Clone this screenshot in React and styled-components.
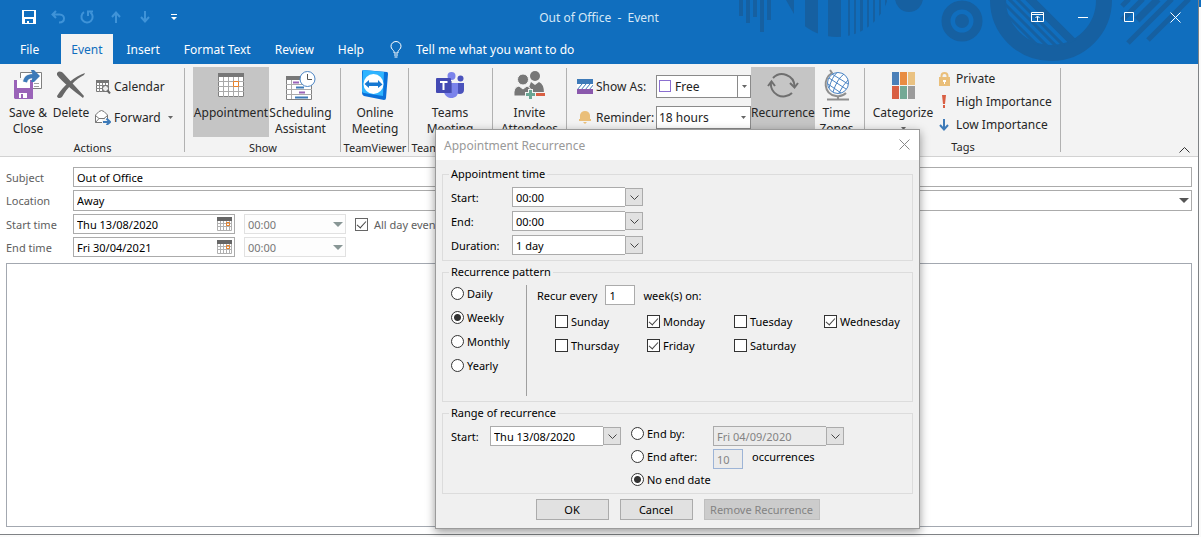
import React, { useState } from 'react'
import styled, { createGlobalStyle } from 'styled-components'

const days = ['Sunday', 'Monday', 'Tuesday', 'Wednesday', 'Thursday', 'Friday', 'Saturday']
const patterns = ['Daily', 'Weekly', 'Monthly', 'Yearly']
const tabs = ['File', 'Event', 'Insert', 'Format Text', 'Review', 'Help']

/* ---------- icons ---------- */

const SaveIcon = () => (
    <svg width="14" height="14" viewBox="0 0 14 14">
        <path fill="#fff" fillRule="evenodd" d="M0 0h14v14H0zM2 1v6h10V1zM3 9v4h2v-2h2v2h4V9z" />
    </svg>
)
const UndoIcon = () => (
    <svg width="14" height="14" viewBox="0 0 14 14" fill="none" stroke="#3f93d8" strokeWidth="2">
        <path d="M5 1L1.500 4.500L5 8M2 4.500H8.500C12 4.500 13 7 13 8.500C13 11 11 12.500 8 12.500" />
    </svg>
)
const RedoIcon = () => (
    <svg width="14" height="14" viewBox="0 0 14 14" fill="none" stroke="#3f93d8" strokeWidth="2">
        <path d="M4 2.200A5.600 5.600 0 1 0 10.500 2.500M8 6V1.500H13" />
    </svg>
)
const ArrowIcon = ({ down, color = '#3f93d8' }) => (
    <svg width="10" height="12" viewBox="0 0 10 12" fill="none" stroke={color} strokeWidth="2">
        <path d={down ? 'M5 0V11M1 6L5 10.500L9 6' : 'M5 12V1M1 6L5 1.500L9 6'} />
    </svg>
)
const MoreIcon = () => (
    <svg width="6" height="6" viewBox="0 0 6 6" fill="#fff">
        <path d="M0 0h6v1H0zM0 3h6L3 6z" />
    </svg>
)
const BulbIcon = () => (
    <svg width="12" height="17" viewBox="0 0 12 17" fill="none" stroke="#fff">
        <path d="M4 12V10.500C3.500 9 1 8 1 5.200A5 4.700 0 0 1 11 5.200C11 8 8.500 9 8 10.500V12ZM4 14H8M4.500 16H7.500" />
    </svg>
)
const RibbonToggleIcon = () => (
    <svg width="13" height="10" viewBox="0 0 13 10" fill="none" stroke="#fff">
        <path d="M.5 .5H12.500V9.500H.5ZM.5 2.500H12.500M6.500 9V4.500M4.500 6L6.500 4L8.500 6" />
    </svg>
)
const MinIcon = () => <svg width="10" height="10" viewBox="0 0 10 10"><path d="M0 5.500H10" stroke="#fff" /></svg>
const MaxIcon = () => <svg width="10" height="10" viewBox="0 0 10 10"><path d="M.5 .5H9.500V9.500H.5Z" fill="none" stroke="#fff" /></svg>
const CrossIcon = ({ color = '#fff' }) => (
    <svg width="11" height="11" viewBox="0 0 11 11"><path d="M.5 .5L10.500 10.500M10.500 .5L.5 10.500" stroke={color} /></svg>
)
const SaveCloseIcon = () => (
    <svg width="30" height="30" viewBox="0 0 30 30">
        <path d="M7.500 8V2.500H28.500V18.500H20" fill="#fff" stroke="#808080" />
        <path d="M21 13.500H26M21 16.500H26" stroke="#a0a0a0" />
        <path fill="#9a63b8" d="M1 10H20V29H2L1 28Z" />
        <path fill="#fff" d="M4 10H17V18H4ZM6 23H14V28H6Z" />
        <path fill="#9a63b8" d="M8 24H10V28H8Z" />
        <path d="M12 12C13 7 16 6 22 6" fill="none" stroke="#f3f3f3" strokeWidth="6" />
        <path d="M12 12C13 7 16 6 22 6" fill="none" stroke="#3d7ab8" strokeWidth="4" />
        <path fill="#3d7ab8" d="M18 0H21L27 6L21 12H18L20 6Z" />
    </svg>
)
const DeleteIcon = () => (
    <svg width="30" height="28" viewBox="0 0 30 28" fill="#686868">
        <path d="M1 2C3 0 5 0 8 3L28 25L27 27C18 20 6 11 1 4Z" />
        <path d="M29 2L28 4C20 8 11 17 6 26C4 28 1 27 1 25C7 15 19 5 29 2Z" />
    </svg>
)
const CalendarSmallIcon = () => (
    <svg width="15" height="14" viewBox="0 0 15 14">
        <path fill="#fff" stroke="#777" d="M.5 .5H12.500V11.500H.5Z" />
        <path fill="#777" d="M0 0H13V3H0Z" />
        <path d="M3.500 3V12M6.500 3V12M9.500 3V12M0 5.500H13M0 8.500H13" stroke="#888" />
        <circle cx="9.500" cy="8.500" r="3" fill="#eee" stroke="#666" />
        <path d="M11.500 10.500L14 13.500" stroke="#666" strokeWidth="2" />
    </svg>
)
const ForwardIcon = () => (
    <svg width="16" height="15" viewBox="0 0 16 15">
        <path fill="#fff" stroke="#777" d="M.5 12.500V5L4 1.500L6.500 .5L9 1.500L12.500 5V12.500Z" />
        <path fill="none" stroke="#777" d="M.5 5.500L4 8.500H9L12.500 5.500M.5 12.500L4 8.500M9 8.500L12 11" />
        <path fill="#f3f3f3" d="M7 9H16V15H7Z" />
        <path fill="none" stroke="#3d7ab8" strokeWidth="2" d="M8 12H14M11.500 8.500L15 12L11.500 15" />
    </svg>
)
const AppointmentIcon = () => (
    <svg width="26" height="24" viewBox="0 0 26 24">
        <path fill="#fff" d="M0 0H26V24H0Z" />
        <path fill="none" stroke="#808080" d="M.5 .5H25.500V23.500H.5Z" />
        <path fill="#777" d="M0 0H26V4H0Z" />
        <path d="M5.500 4V24M10.500 4V24M15.500 4V24M20.500 4V24M0 8.500H26M0 13.500H26M0 18.500H26" stroke="#aaa" />
        <path d="M15.500 8.500H20.500V13.500H15.500Z" fill="#fff" stroke="#e8822b" />
    </svg>
)
const SchedulingIcon = () => (
    <svg width="30" height="29" viewBox="0 0 30 29">
        <path fill="#fff" stroke="#808080" d="M.5 5.500H25.500V28.500H.5Z" />
        <path fill="#777" d="M0 5H16V9H0Z" />
        <path d="M5.500 9V28M0 13.500H26M0 18.500H26M0 23.500H26" stroke="#aaa" />
        <path d="M7 11.500H13M13 21.500H19" stroke="#9a63b8" strokeWidth="2" />
        <path d="M10 16.500H18M9 26.500H22" stroke="#3d7ab8" strokeWidth="2" />
        <circle cx="21.500" cy="8" r="7.500" fill="#fff" stroke="#4b84c4" />
        <path d="M21.500 3V8.500H26" fill="none" stroke="#555" />
    </svg>
)
const TeamViewerIcon = () => (
    <svg width="28" height="32" viewBox="0 0 28 32">
        <path fill="#0a6fd8" d="M2 1L26 3Q27 3 27 5L25 29Q25 31 23 31L3 27Q1 26 1 24L1 3Q1 1 2 1Z" />
        <path fill="#2fb4ff" d="M2 1L23 3L22 27L3 24Q1 24 1 22Z" />
        <circle cx="12.500" cy="15" r="10" fill="#fff" />
        <path fill="#1678d2" d="M3.500 15L8 11V13.500H17V11L21.500 15.500L17 19V17H8V19Z" />
    </svg>
)
const TeamsIcon = () => (
    <svg width="29" height="27" viewBox="0 0 29 27">
        <circle cx="24.500" cy="6.500" r="3" fill="#4b53bc" />
        <path fill="#4b53bc" d="M19 11H28V18C28 22 24 23 20 21Z" />
        <circle cx="15.500" cy="4" r="4" fill="#7b83eb" />
        <path fill="#7b83eb" d="M10 11H22V19C22 24 19 26 15.500 26C12 26 9 24 8 20Z" />
        <path fill="#3a4191" d="M10 9H16V21H10Z" opacity=".5" />
        <rect y="6" width="15" height="15" rx="1" fill="#4349b3" />
        <path d="M4 10H11.500M7.500 10V18" stroke="#fff" strokeWidth="2" />
    </svg>
)
const InviteIcon = () => (
    <svg width="32" height="30" viewBox="0 0 32 30">
        <g fill="#777">
            <circle cx="21" cy="6" r="5" />
            <path d="M14 20L17 12L21 15L25 12Q30 14 30 23H16Z" />
            <g stroke="#f3f3f3">
                <circle cx="9" cy="9.500" r="5.500" />
                <path d="M0 26Q-1 17 5 16L9 19L13 16Q17 17 17 22V26Z" />
            </g>
        </g>
        <path d="M16.500 19V30M11 24.500H32" stroke="#f3f3f3" strokeWidth="5" />
        <path d="M16.500 20V29M12 24.500H21" stroke="#6aa593" strokeWidth="3" />
        <path d="M22 24.500H31" stroke="#d95f43" strokeWidth="3" />
    </svg>
)
const ShowAsIcon = () => (
    <svg width="16" height="15" viewBox="0 0 16 15">
        <path fill="#fff" d="M0 0H16V15H0Z" />
        <path d="M0 11L5 5M4 11L9 5M8 11L13 5M12 11L17 5" stroke="#3d7ab8" />
        <path fill="#3d7ab8" d="M0 0H16V5H0Z" />
        <path fill="#8a58ac" d="M0 10H16V15H0Z" />
    </svg>
)
const BellIcon = () => (
    <svg width="14" height="15" viewBox="0 0 14 15" fill="#eabf7a">
        <path d="M2 9V5Q3 1 7 1Q11 1 12 5V9H13V11H1V9ZM5 12H9L7 14Z" />
    </svg>
)
const RecurrenceIcon = () => (
    <svg width="32" height="28" viewBox="0 0 32 28" fill="none" stroke="#6f6f6f" strokeWidth="2">
        <path d="M6 7A12.500 12.500 0 0 1 27.500 15M25 22A12.500 12.500 0 0 1 4 11" />
        <path d="M1 15L4.500 10.500L8 15M31 12L27.500 16.500L23 12" />
    </svg>
)
const GlobeIcon = () => (
    <svg width="26" height="32" viewBox="0 0 26 32" fill="none">
        <path d="M6 1L8 4C-1 9 -1 25 12 27Q18 28 22 24M14 27V30M3 30.500H25" stroke="#8f8f8f" strokeWidth="2" />
        <circle cx="14" cy="14" r="10.500" fill="#fff" stroke="#4b84c4" />
        <path d="M5 9L22 20M8 5L24 15M4 15L17 24M20 5Q13 10 9 23M24 11Q19 16 15 24M13 3.500Q8 8 5 19" stroke="#4b84c4" />
    </svg>
)
const CategorizeIcon = () => (
    <svg width="23" height="27" viewBox="0 0 23 27">
        <path fill="#4a7fb8" d="M0 0H7V13H0Z" />
        <path fill="#e88c42" d="M8 0H15V13H8Z" />
        <path fill="#eac282" d="M16 0H23V13H16Z" />
        <path fill="#d95f43" d="M0 14H7V27H0Z" />
        <path fill="#74a995" d="M8 14H15V27H8Z" />
        <path fill="#9b9b9b" d="M16 14H23V27H16Z" />
    </svg>
)
const LockIcon = () => (
    <svg width="11" height="14" viewBox="0 0 11 14">
        <path d="M2.500 6V4A3 3 0 0 1 8.500 4V6" fill="none" stroke="#eabf7a" strokeWidth="2" />
        <path fill="#eabf7a" d="M0 5H11V14H0Z" />
        <path fill="#fff" d="M4 8H7V10H6V12H5V10H4Z" />
    </svg>
)
const HighIcon = () => (
    <svg width="4" height="13" viewBox="0 0 4 13" fill="#d95f43"><path d="M0 0H4L3 9H1ZM1 10H3V13H1Z" /></svg>
)
const DatePickIcon = () => (
    <svg width="15" height="14" viewBox="0 0 15 14">
        <path fill="#fff" d="M0 0H15V14H0Z" />
        <path d="M.5 .5H14.500V13.500H.5ZM3.500 3V14M6.500 3V14M9.500 3V14M12.500 3V14M0 6.500H15M0 9.500H15" fill="none" stroke="#b0b0b0" />
        <path fill="#666" d="M0 0H15V4H0Z" />
        <path d="M9.500 5.500H12.500V8.500H9.500Z" fill="none" stroke="#e8822b" />
    </svg>
)
const CaretIcon = ({ size = 5, color = '#666' }) => (
    <svg width={size} height={Math.ceil(size / 2)} viewBox="0 0 10 5" preserveAspectRatio="none"><path d="M0 0H10L5 5Z" fill={color} /></svg>
)
const ChevronIcon = () => (
    <svg width="9" height="5" viewBox="0 0 9 5"><path d="M.5 .5L4.500 4.500L8.500 .5" fill="none" stroke="#444" /></svg>
)
const CollapseIcon = () => (
    <svg width="11" height="6" viewBox="0 0 11 6"><path d="M.5 5.500L5.500 .5L10.500 5.500" fill="none" stroke="#333" /></svg>
)
const HeaderArt = () => (
    <Art width="459" height="64" viewBox="740 0 459 64" fill="#1660a1">
        <defs>
            <clipPath id="bars"><circle cx="838" cy="-16" r="53" /></clipPath>
            <clipPath id="hoop"><circle cx="1052" cy="0" r="47" /></clipPath>
        </defs>
        <path d="M740 0h4v16h-4zM747 0h4v23h-4zM754 0h4v17h-4zM761 0h4v32h-4zM768 0h4v20h-4zM787 0h8v14z" />
        <path clipPath="url(#bars)" d="M806 0h13v40h-13zM829 0h13v40h-13zM849 0h2v40h-2zM855 0h2v40h-2zM861 0h3v40h-3zM868 0h2v40h-2zM874 0h2v40h-2zM880 0h2v40h-2zM886 0h2v40h-2z" />
        <circle cx="910" cy="-2" r="14" />
        <circle cx="963" cy="21" r="16" fill="none" stroke="#1660a1" strokeWidth="9" />
        <circle cx="963" cy="21" r="7" />
        <circle cx="1052" cy="0" r="53" fill="none" stroke="#1660a1" strokeWidth="16" />
        <g clipPath="url(#hoop)" stroke="#1660a1" fill="none">
            <path strokeWidth="8" d="M1022 -10L1082 50" />
            <path strokeWidth="3" d="M1009 -10L1069 50M1001 -10L1061 50M992 -10L1052 50M983 -10L1043 50" />
        </g>
        <g stroke="#1660a1" fill="none">
            <path strokeWidth="5" d="M1123 6L1130 -1M1123 20L1144 -1M1129 43L1173 -1M1149 40L1190 -1" />
            <path strokeWidth="7" d="M1138 20L1159 -1" />
        </g>
    </Art>
)

/* ---------- small building pieces ---------- */

const Combo = ({ value, width, disabled, id, label }) => (
    <ComboWrap $width={width}>
        <ComboSelect id={id} aria-label={label} disabled={disabled} defaultValue={value}>
            <option>{value}</option>
        </ComboSelect>
        <ComboArrow><ChevronIcon /></ComboArrow>
    </ComboWrap>
)

const BigItem = ({ icon, lines, width, active, menu }) => (
    <BigButton type="button" $width={width} $active={active}>
        <IconSlot>{icon}</IconSlot>
        {lines.map((line) => <span key={line}>{line}</span>)}
        {menu && <MenuCaret><CaretIcon /></MenuCaret>}
    </BigButton>
)

const RecurrenceDialog = () => {
    const [pattern, setPattern] = useState('Weekly')
    const [checked, setChecked] = useState(['Monday', 'Wednesday', 'Friday'])
    const [end, setEnd] = useState('none')

    const toggleDay = (day) => {
        setChecked(checked.includes(day) ? checked.filter((d) => d !== day) : [...checked, day])
    }

    return (
        <Dialog role="dialog" aria-label="Appointment Recurrence">
            <DialogBar>
                Appointment Recurrence
                <CloseButton type="button" aria-label="Close dialog"><CrossIcon color="#888" /></CloseButton>
            </DialogBar>
            <Group $top={5} $bottom={5}>
                <legend>Appointment time</legend>
                <TimeGrid>
                    <label htmlFor="rec-start">Start:</label>
                    <Combo id="rec-start" value="00:00" width={131} />
                    <label htmlFor="rec-end">End:</label>
                    <Combo id="rec-end" value="00:00" width={131} />
                    <label htmlFor="rec-duration">Duration:</label>
                    <Combo id="rec-duration" value="1 day" width={131} />
                </TimeGrid>
            </Group>
            <Group $top={1} $bottom={5}>
                <legend>Recurrence pattern</legend>
                <PatternBody>
                    <PatternList>
                        {patterns.map((p) => (
                            <Option key={p} $height={24}>
                                <Radio type="radio" name="pattern" checked={pattern === p} onChange={() => setPattern(p)} />
                                {p}
                            </Option>
                        ))}
                    </PatternList>
                    <PatternDetail>
                        <EveryRow>
                            <label htmlFor="every">Recur every</label>
                            <NumberBox id="every" defaultValue="1" />
                            <span>week(s) on:</span>
                        </EveryRow>
                        <DayGrid>
                            {days.map((day) => (
                                <Option key={day} $height={24}>
                                    <Check type="checkbox" checked={checked.includes(day)} onChange={() => toggleDay(day)} />
                                    {day}
                                </Option>
                            ))}
                        </DayGrid>
                    </PatternDetail>
                </PatternBody>
            </Group>
            <Group $top={5} $bottom={1}>
                <legend>Range of recurrence</legend>
                <RangeBody>
                    <RangeStart>
                        <label htmlFor="range-start">Start:</label>
                        <Combo id="range-start" value="Thu 13/08/2020" width={131} />
                    </RangeStart>
                    <RangeEnd>
                        <Option $height={15}>
                            <Radio type="radio" name="end" checked={end === 'by'} onChange={() => setEnd('by')} />
                            End by:
                        </Option>
                        <Combo value="Fri 04/09/2020" label="End by date" width={131} disabled />
                        <Option $height={15}>
                            <Radio type="radio" name="end" checked={end === 'after'} onChange={() => setEnd('after')} />
                            End after:
                        </Option>
                        <Occurrences>
                            <NumberBox aria-label="Occurrences" defaultValue="10" disabled />
                            <span>occurrences</span>
                        </Occurrences>
                        <Option $height={15}>
                            <Radio type="radio" name="end" checked={end === 'none'} onChange={() => setEnd('none')} />
                            No end date
                        </Option>
                    </RangeEnd>
                </RangeBody>
            </Group>
            <DialogActions>
                <DialogButton type="button">OK</DialogButton>
                <DialogButton type="button">Cancel</DialogButton>
                <DialogButton type="button" $wide disabled>Remove Recurrence</DialogButton>
            </DialogActions>
        </Dialog>
    )
}

const App = () => {
    return (
        <Desktop>
            <GlobalStyle />
            <Window>
                <Header>
                    <HeaderArt />
                    <TitleBar>
                        <QuickBar>
                            <QuickButton type="button" aria-label="Save"><SaveIcon /></QuickButton>
                            <QuickButton type="button" aria-label="Undo"><UndoIcon /></QuickButton>
                            <QuickButton type="button" aria-label="Redo"><RedoIcon /></QuickButton>
                            <QuickButton type="button" aria-label="Previous item"><ArrowIcon /></QuickButton>
                            <QuickButton type="button" aria-label="Next item"><ArrowIcon down /></QuickButton>
                            <QuickButton type="button" aria-label="Customize"><MoreIcon /></QuickButton>
                        </QuickBar>
                        <WindowTitle>Out of Office{'\u00a0 -\u00a0 '}Event</WindowTitle>
                        <WindowControls>
                            <ControlButton type="button" aria-label="Ribbon options"><RibbonToggleIcon /></ControlButton>
                            <ControlButton type="button" aria-label="Minimize"><MinIcon /></ControlButton>
                            <ControlButton type="button" aria-label="Maximize"><MaxIcon /></ControlButton>
                            <ControlButton type="button" aria-label="Close"><CrossIcon /></ControlButton>
                        </WindowControls>
                    </TitleBar>
                    <TabBar>
                        {tabs.map((tab) => (
                            <Tab key={tab} type="button" $active={tab === 'Event'}>{tab}</Tab>
                        ))}
                        <TellMe type="button"><BulbIcon />Tell me what you want to do</TellMe>
                    </TabBar>
                </Header>

                <Ribbon>
                    <RibbonGroup $width={185}>
                        <Items $left={6}>
                            <BigItem icon={<SaveCloseIcon />} lines={['Save &', 'Close']} width={44} />
                            <BigItem icon={<DeleteIcon />} lines={['Delete']} width={42} />
                            <SmallStack>
                                <SmallButton type="button"><SmallIcon><CalendarSmallIcon /></SmallIcon>Calendar</SmallButton>
                                <SmallButton type="button">
                                    <SmallIcon><ForwardIcon /></SmallIcon>Forward <ForwardCaret><CaretIcon /></ForwardCaret>
                                </SmallButton>
                            </SmallStack>
                        </Items>
                        <GroupName>Actions</GroupName>
                    </RibbonGroup>
                    <RibbonGroup $width={156}>
                        <Items $left={8}>
                            <BigItem icon={<AppointmentIcon />} lines={['Appointment']} width={76} active />
                            <BigItem icon={<SchedulingIcon />} lines={['Scheduling', 'Assistant']} width={63} />
                        </Items>
                        <GroupName>Show</GroupName>
                    </RibbonGroup>
                    <RibbonGroup $width={68}>
                        <Items $left={3}>
                            <BigItem icon={<TeamViewerIcon />} lines={['Online', 'Meeting']} width={62} />
                        </Items>
                        <GroupName>TeamViewer</GroupName>
                    </RibbonGroup>
                    <RibbonGroup $width={84}>
                        <Items $left={10}>
                            <BigItem icon={<TeamsIcon />} lines={['Teams', 'Meeting']} width={62} />
                        </Items>
                        <GroupName>Teams Meeting</GroupName>
                    </RibbonGroup>
                    <RibbonGroup $width={74}>
                        <Items $left={3}>
                            <BigItem icon={<InviteIcon />} lines={['Invite', 'Attendees']} width={67} />
                        </Items>
                    </RibbonGroup>
                    <RibbonGroup $width={298}>
                        <Items $left={10}>
                            <OptionGrid>
                                <RibbonLabel htmlFor="show-as"><SmallIcon><ShowAsIcon /></SmallIcon>Show As:</RibbonLabel>
                                <RibbonCombo>
                                    <RibbonSelect id="show-as" $swatch defaultValue="Free"><option>Free</option></RibbonSelect>
                                    <FreeSwatch />
                                    <RibbonArrow $split><CaretIcon /></RibbonArrow>
                                </RibbonCombo>
                                <RibbonLabel htmlFor="reminder"><SmallIcon><BellIcon /></SmallIcon>Reminder:</RibbonLabel>
                                <RibbonCombo>
                                    <RibbonSelect id="reminder" defaultValue="18 hours"><option>18 hours</option></RibbonSelect>
                                    <RibbonArrow><CaretIcon /></RibbonArrow>
                                </RibbonCombo>
                            </OptionGrid>
                            <BigItem icon={<RecurrenceIcon />} lines={['Recurrence']} width={64} active />
                            <BigItem icon={<GlobeIcon />} lines={['Time', 'Zones']} width={43} />
                        </Items>
                    </RibbonGroup>
                    <RibbonGroup $width={196}>
                        <Items $left={8}>
                            <BigItem icon={<CategorizeIcon />} lines={['Categorize']} width={60} menu />
                            <TagStack>
                                <SmallButton type="button"><SmallIcon><LockIcon /></SmallIcon>Private</SmallButton>
                                <SmallButton type="button"><SmallIcon><HighIcon /></SmallIcon>High Importance</SmallButton>
                                <SmallButton type="button"><SmallIcon><ArrowIcon down color="#3d7ab8" /></SmallIcon>Low Importance</SmallButton>
                            </TagStack>
                        </Items>
                        <GroupName>Tags</GroupName>
                    </RibbonGroup>
                    <CollapseButton type="button" aria-label="Collapse ribbon"><CollapseIcon /></CollapseButton>
                </Ribbon>

                <Form>
                    <FormRow>
                        <label htmlFor="subject">Subject</label>
                        <TextField id="subject" defaultValue="Out of Office" />
                    </FormRow>
                    <FormRow>
                        <label htmlFor="location">Location</label>
                        <FieldBox $grow>
                            <TextField id="location" $tall defaultValue="Away" />
                            <FieldMark><CaretIcon size={10} color="#555" /></FieldMark>
                        </FieldBox>
                    </FormRow>
                    <FormRow>
                        <label htmlFor="start">Start time</label>
                        <FieldBox $width={162}>
                            <TextField id="start" defaultValue="Thu 13/08/2020" />
                            <FieldMark><DatePickIcon /></FieldMark>
                        </FieldBox>
                        <FieldBox $width={102}>
                            <TimeSelect aria-label="Start hour" disabled defaultValue="00:00"><option>00:00</option></TimeSelect>
                            <FieldMark><CaretIcon size={10} color="#889695" /></FieldMark>
                        </FieldBox>
                        <AllDay><Check type="checkbox" $soft defaultChecked />All day event</AllDay>
                    </FormRow>
                    <FormRow>
                        <label htmlFor="end">End time</label>
                        <FieldBox $width={162}>
                            <TextField id="end" defaultValue="Fri 30/04/2021" />
                            <FieldMark><DatePickIcon /></FieldMark>
                        </FieldBox>
                        <FieldBox $width={102}>
                            <TimeSelect aria-label="End hour" disabled defaultValue="00:00"><option>00:00</option></TimeSelect>
                            <FieldMark><CaretIcon size={10} color="#889695" /></FieldMark>
                        </FieldBox>
                    </FormRow>
                    <Notes aria-label="Notes" />
                </Form>
            </Window>
            <RecurrenceDialog />
        </Desktop>
    )
}

export default App

const GlobalStyle = createGlobalStyle`
    *, *::before, *::after {
        box-sizing: border-box;
    }
    body {
        margin: 0;
        background: #fff;
    }
    body, button, input, select, textarea {
        font-family: "Segoe UI", "Noto Sans", sans-serif;
        font-size: 11px;
    }
    button {
        border: 0;
        padding: 0;
        background: none;
        color: inherit;
    }
    svg {
        display: block;
        flex: none;
    }
`
const Desktop = styled.div`
    position: relative;
    display: flex;
    min-height: 100vh;
    padding: 0 2px 2px 0;
    background: linear-gradient(#106ebe, #106ebe) right top / 2px 7px no-repeat, #fafafa;
    overflow: hidden;
`
const Window = styled.div`
    flex: 1;
    min-width: 0;
    display: flex;
    flex-direction: column;
    border-right: 1px solid #7f8285;
    border-bottom: 1px solid #7f8285;
    background: #fff;
`
const Header = styled.header`
    position: relative;
    background: #106ebe;
    color: #fff;
    overflow: hidden;
`
const Art = styled.svg`
    position: absolute;
    top: 0;
    right: 0;
`
const TitleBar = styled.div`
    position: relative;
    display: grid;
    grid-template-columns: 1fr auto 1fr;
    align-items: center;
    height: 34px;
    font-size: 12px;
`
const QuickBar = styled.div`
    display: flex;
    padding-left: 14px;
`
const QuickButton = styled.button`
    display: flex;
    align-items: center;
    justify-content: center;
    width: 29px;
    height: 34px;
`
const WindowTitle = styled.div`
    color: #d6e8f7;
    white-space: nowrap;
`
const WindowControls = styled.div`
    display: flex;
    justify-content: flex-end;
`
const ControlButton = styled(QuickButton)`
    width: 46px;
    height: 30px;
`
const TabBar = styled.nav`
    position: relative;
    display: flex;
    gap: 4px;
    height: 30px;
    padding-left: 10px;
`
const Tab = styled.button`
    padding: 0 10px;
    font-size: 12px;
    white-space: nowrap;
    color: ${({ $active }) => ($active ? '#106ebe' : '#fff')};
    background: ${({ $active }) => ($active ? '#f3f3f3' : 'transparent')};
    &:first-child {
        margin-right: 8px;
    }
`
const TellMe = styled.button`
    display: flex;
    align-items: center;
    gap: 14px;
    padding-left: 12px;
    font-size: 12px;
    white-space: nowrap;
`
const Ribbon = styled.div`
    display: flex;
    height: 93px;
    padding-top: 3px;
    background: #f3f3f3;
    border-bottom: 1px solid #d2d2d2;
    color: #262626;
    font-size: 12px;
`
const RibbonGroup = styled.section`
    display: flex;
    flex-direction: column;
    flex: none;
    width: ${({ $width }) => $width}px;
    background: linear-gradient(#b1b1b1, #b1b1b1) right 1px / 1px 84px no-repeat;
`
const Items = styled.div`
    display: flex;
    height: 70px;
    padding-left: ${({ $left }) => $left}px;
`
const GroupName = styled.div`
    padding-top: 2px;
    line-height: 18px;
    font-size: 11px;
    text-align: center;
    white-space: nowrap;
`
const BigButton = styled.button`
    display: flex;
    flex-direction: column;
    align-items: center;
    flex: none;
    width: ${({ $width }) => $width}px;
    padding-top: 2px;
    font-size: 12px;
    line-height: 16px;
    white-space: nowrap;
    background: ${({ $active }) => ($active ? '#c5c5c5' : 'transparent')};
`
const IconSlot = styled.span`
    display: flex;
    flex: none;
    align-items: center;
    justify-content: center;
    height: 32px;
    margin-bottom: 4px;
`
const MenuCaret = styled.span`
    padding-top: 6px;
`
const SmallStack = styled.div`
    display: flex;
    flex-direction: column;
    padding: 4px 0 0 3px;
`
const SmallButton = styled.button`
    display: flex;
    align-items: center;
    height: 31px;
    font-size: 12px;
    white-space: nowrap;
`
const SmallIcon = styled.span`
    display: flex;
    align-items: center;
    justify-content: center;
    width: 16px;
    margin-right: 3px;
`
const ForwardCaret = styled.span`
    margin-left: 7px;
`
const TagStack = styled.div`
    display: flex;
    flex-direction: column;
    padding-left: 3px;
    & ${SmallButton} {
        height: 23px;
    }
    & ${SmallIcon} {
        margin-right: 4px;
    }
`
const OptionGrid = styled.div`
    display: grid;
    grid-template-columns: 79px 95px;
    grid-auto-rows: 31px;
    align-items: center;
    padding-top: 4px;
`
const RibbonLabel = styled.label`
    display: flex;
    align-items: center;
    white-space: nowrap;
`
const RibbonCombo = styled.div`
    position: relative;
    display: flex;
`
const RibbonSelect = styled.select`
    appearance: none;
    width: 100%;
    height: 23px;
    padding: 0 0 0 ${({ $swatch }) => ($swatch ? 18 : 2)}px;
    border: 1px solid #8a8a8a;
    border-radius: 0;
    background: #fff;
    color: #222;
    font-size: 12px;
`
const FreeSwatch = styled.span`
    position: absolute;
    top: 5px;
    left: 3px;
    width: 12px;
    height: 12px;
    border: 1px solid #8b6fd0;
    pointer-events: none;
`
const RibbonArrow = styled.span`
    position: absolute;
    top: 1px;
    right: 1px;
    display: flex;
    align-items: center;
    justify-content: center;
    width: 13px;
    height: 21px;
    border-left: ${({ $split }) => ($split ? '1px solid #8a8a8a' : '0')};
    pointer-events: none;
`
const CollapseButton = styled.button`
    align-self: flex-end;
    margin-left: auto;
    padding: 0 8px 3px;
`
const Form = styled.form`
    flex: 1;
    display: flex;
    flex-direction: column;
    gap: 3px;
    padding: 10px 6px 7px;
    color: #5e5e5e;
`
const FormRow = styled.div`
    display: flex;
    align-items: center;
    gap: 9px;
    & > label:first-child {
        width: 58px;
        white-space: nowrap;
    }
`
const TextField = styled.input`
    flex: 1;
    min-width: 0;
    height: ${({ $tall }) => ($tall ? 21 : 20)}px;
    padding: 0 3px;
    border: 1px solid #ababab;
    background: #fff;
    color: #000;
`
const FieldBox = styled.div`
    position: relative;
    display: flex;
    flex: ${({ $grow }) => ($grow ? '1' : 'none')};
    width: ${({ $width }) => ($width ? `${$width}px` : 'auto')};
`
const FieldMark = styled.span`
    position: absolute;
    top: 0;
    right: 3px;
    display: flex;
    align-items: center;
    height: 20px;
    pointer-events: none;
`
const TimeSelect = styled.select`
    appearance: none;
    width: 100%;
    height: 20px;
    padding: 0 3px;
    border: 1px solid #e1e1e1;
    border-radius: 0;
    background: #fdfdfd;
    color: #777;
    opacity: 1;
`
const AllDay = styled.label`
    display: flex;
    align-items: center;
    gap: 6px;
    white-space: nowrap;
`
const Notes = styled.textarea`
    flex: 1;
    margin-top: 3px;
    border: 1px solid #a3a8b0;
    resize: none;
`
const Dialog = styled.div`
    position: absolute;
    top: 129px;
    left: 435px;
    width: 485px;
    padding-bottom: 8px;
    border: 1px solid #9b9b9b;
    background: #f0f0f0;
    color: #000;
    box-shadow: 0 3px 9px rgba(0, 0, 0, 0.4);
`
const DialogBar = styled.div`
    display: flex;
    align-items: center;
    justify-content: space-between;
    height: 30px;
    padding: 0 9px 0 8px;
    margin-bottom: 6px;
    background: #fff;
    color: #999;
    font-size: 12px;
`
const CloseButton = styled.button`
    padding-bottom: 2px;
`
const Group = styled.fieldset`
    min-width: 0;
    margin: 0 6px 3px;
    padding: ${({ $top }) => $top}px 8px ${({ $bottom }) => $bottom}px 6px;
    border: 1px solid #dcdcdc;
    legend {
        padding: 0 2px;
        line-height: 16px;
    }
`
const TimeGrid = styled.div`
    display: grid;
    grid-template-columns: 61px auto;
    grid-auto-rows: 20px;
    row-gap: 4px;
    align-items: center;
    padding-left: 2px;
`
const ComboWrap = styled.div`
    position: relative;
    display: flex;
    width: ${({ $width }) => $width}px;
`
const ComboSelect = styled.select`
    appearance: none;
    width: 100%;
    height: 20px;
    padding: 0 3px;
    border: 1px solid #ababab;
    border-radius: 0;
    background: #fff;
    color: #000;
    opacity: 1;
    &:disabled {
        background: #ebebeb;
        color: #838383;
    }
`
const ComboArrow = styled.span`
    position: absolute;
    top: 1px;
    right: 0;
    display: flex;
    align-items: center;
    justify-content: center;
    width: 18px;
    height: 18px;
    border: 1px solid #ababab;
    background: #e1e1e1;
    box-shadow: 0 1px #f0f0f0, 0 -1px #f0f0f0;
    pointer-events: none;
`
const PatternBody = styled.div`
    display: flex;
    min-height: 115px;
    padding-left: 2px;
`
const PatternList = styled.div`
    width: 75px;
`
const PatternDetail = styled.div`
    flex: 1;
    margin-top: 4px;
    padding-left: 10px;
    border-left: 1px solid #9f9f9f;
`
const EveryRow = styled.div`
    display: flex;
    align-items: center;
    gap: 8px;
`
const DayGrid = styled.div`
    display: grid;
    grid-template-columns: 92px 87px 90px auto;
    padding: 4px 0 0 18px;
`
const Option = styled.label`
    display: flex;
    align-items: center;
    gap: 3px;
    height: ${({ $height }) => $height}px;
    white-space: nowrap;
`
const Radio = styled.input`
    appearance: none;
    flex: none;
    width: 13px;
    height: 13px;
    margin: 0;
    border: 1px solid #333;
    border-radius: 50%;
    background: #fff;
    &:checked {
        background: radial-gradient(circle, #333 0 3px, #fff 4px);
    }
`
const Check = styled.input`
    appearance: none;
    flex: none;
    display: flex;
    justify-content: center;
    width: 13px;
    height: 13px;
    margin: 0;
    border: 1px solid ${({ $soft }) => ($soft ? '#666' : '#333')};
    background: #fff;
    &:checked::after {
        content: '';
        width: 5px;
        height: 9px;
        border: solid #444;
        border-width: 0 1px 1px 0;
        transform: rotate(42deg);
    }
`
const NumberBox = styled.input`
    width: 30px;
    height: 20px;
    padding: 0 3px;
    border: 1px solid #ababab;
    background: #fff;
    &:disabled {
        border-color: #9db4d6;
        background: #ebebeb;
        color: #838383;
    }
`
const RangeBody = styled.div`
    display: flex;
    padding-left: 2px;
`
const RangeStart = styled.div`
    display: grid;
    grid-template-columns: 39px auto;
    align-items: center;
    align-self: flex-start;
    margin-right: 10px;
`
const RangeEnd = styled.div`
    display: grid;
    grid-template-columns: 82px auto;
    grid-auto-rows: 20px;
    row-gap: 3px;
`
const Occurrences = styled.div`
    display: flex;
    gap: 9px;
`
const DialogActions = styled.div`
    display: flex;
    justify-content: center;
    gap: 11px;
    padding-top: 2px;
`
const DialogButton = styled.button`
    width: ${({ $wide }) => ($wide ? 116 : 73)}px;
    height: 21px;
    border: 1px solid #ababab;
    background: #e1e1e1;
    &:disabled {
        border-color: #bfbfbf;
        background: #cccccc;
        color: #838383;
    }
`
